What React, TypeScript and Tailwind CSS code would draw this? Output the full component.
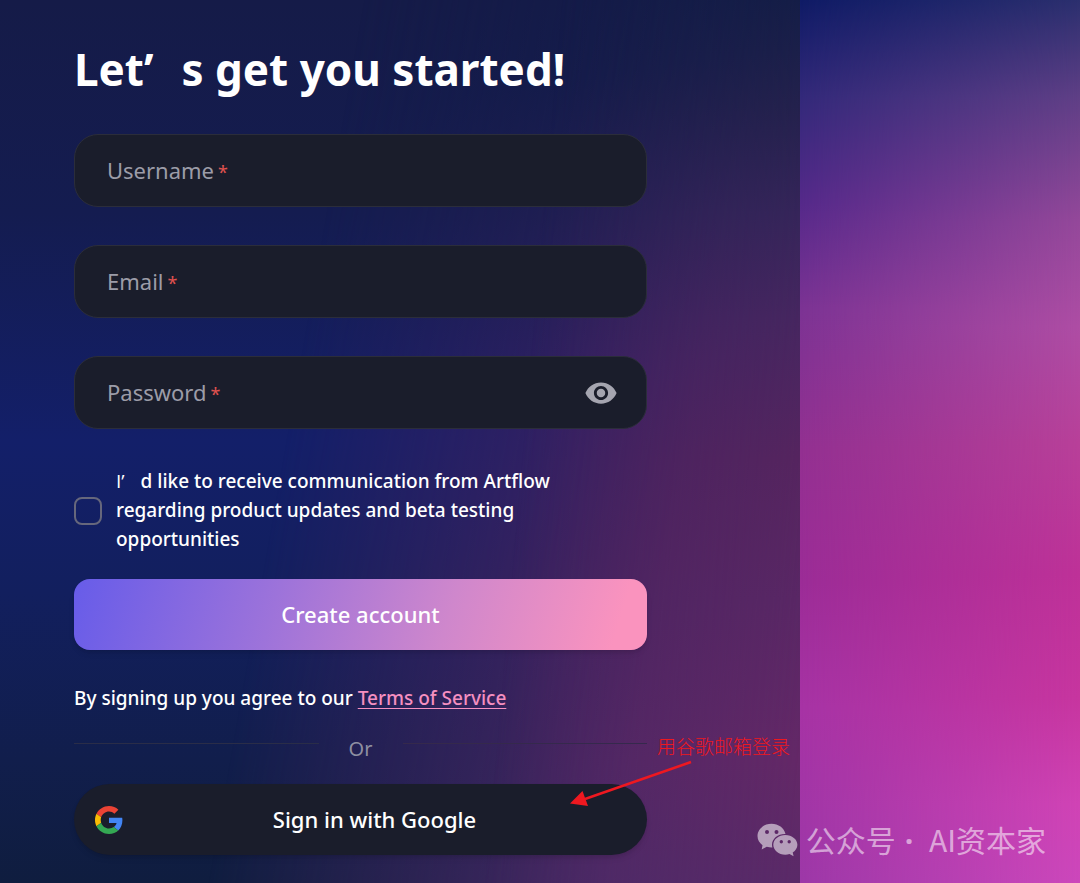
import { MdVisibility } from "react-icons/md";

function Field({ id, label, type }: { id: string; label: string; type: string }) {
  return (
    <div className="relative flex h-[73px] items-center rounded-3xl border border-[#2b2d3a] bg-[#1a1d2b]">
      <input
        id={id}
        type={type}
        required
        placeholder=" "
        className="peer h-full w-full rounded-3xl bg-transparent px-8 text-[22px] text-white outline-none"
      />
      <label
        htmlFor={id}
        className="pointer-events-none absolute left-8 text-[22px] leading-8 text-[#9c9ca8] peer-[:not(:placeholder-shown)]:hidden"
      >
        {label}
        <span className="ml-1 text-lg leading-8 text-[#e0524f]">*</span>
      </label>
      {type === "password" && (
        <button type="button" aria-label="Show password" className="mr-7 shrink-0 text-[#a5a5b0]">
          <MdVisibility size={34} />
        </button>
      )}
    </div>
  );
}

function GoogleIcon() {
  return (
    <svg width="28" height="28" viewBox="0 0 48 48" aria-hidden="true">
      <path
        fill="#ea4335"
        d="M24 9.500c3.540 0 6.710 1.220 9.210 3.600l6.850-6.850C35.900 2.380 30.470 0 24 0 14.620 0 6.510 5.380 2.560 13.220l7.980 6.190C12.430 13.720 17.740 9.500 24 9.500z"
      />
      <path
        fill="#4285f4"
        d="M46.980 24.550c0-1.570-.15-3.090-.38-4.550H24v9.020h12.940c-.58 2.960-2.260 5.480-4.780 7.180l7.730 6c4.510-4.180 7.090-10.360 7.090-17.650z"
      />
      <path
        fill="#fbbc05"
        d="M10.530 28.590c-.48-1.450-.76-2.990-.76-4.590s.27-3.140.76-4.590l-7.980-6.190C.92 16.460 0 20.120 0 24c0 3.880.92 7.540 2.560 10.780l7.970-6.190z"
      />
      <path
        fill="#34a853"
        d="M24 48c6.480 0 11.930-2.130 15.890-5.810l-7.730-6c-2.150 1.450-4.920 2.300-8.160 2.300-6.260 0-11.570-4.220-13.470-9.910l-7.980 6.190C6.510 42.620 14.620 48 24 48z"
      />
    </svg>
  );
}

function WeChatIcon() {
  return (
    <svg width="41" height="34" viewBox="0 0 41 34" fill="currentColor" aria-hidden="true">
      <path
        fillRule="evenodd"
        d="M14.500.8C7 .8.5 6 .5 13c0 3.800 1.900 7 5 9.200L4.700 26.500l5.100-2.700c1.600.5 3.200.7 5 .7h.6A9.600 9.600 0 0 1 15 21.600c0-6.100 5.900-10.700 12.900-10.700h.6C27 5 21.500.8 14.500.8ZM10 6.900a2 2 0 1 1 0 4 2 2 0 0 1 0-4Zm9.500 0a2 2 0 1 1 0 4 2 2 0 0 1 0-4Z"
      />
      <path
        fillRule="evenodd"
        d="M28.300 11.900c-6.700 0-12 4.400-12 9.900s5.300 9.900 12 9.900c1.500 0 2.900-.2 4.200-.6l4.100 2.100-.9-3.700c2.900-1.800 4.700-4.600 4.700-7.700 0-5.500-5.400-9.900-12.100-9.900Zm-4 5.200a1.700 1.700 0 1 1 0 3.400 1.700 1.700 0 0 1 0-3.400Zm7.900 0a1.700 1.700 0 1 1 0 3.400 1.700 1.700 0 0 1 0-3.400Z"
      />
    </svg>
  );
}

export default function App() {
  return (
    <div className="relative flex min-h-screen bg-[#151b48] font-['Noto_Sans','Noto_Sans_CJK_SC',sans-serif] text-white">
      <main className="relative isolate w-[74.1%] bg-[linear-gradient(180deg,#151b48_0%,#141c50_24%,#131f69_50%,#121f5e_67%,#111e4c_86%,#0f1d3f_100%)] pt-[39px] pb-7 pl-[74px]">
        <div className="absolute inset-0 -z-10 bg-[linear-gradient(172deg,#131b47_0%,#151c4b_16%,#2a2055_31%,#3e2160_46%,#48235f_67%,#472a66_100%)] mask-[linear-gradient(100deg,transparent_38%,#000_80%)]" />
        <div className="absolute inset-0 -z-10 bg-[linear-gradient(180deg,#151e46_0%,#25224c_12%,#37265a_24%,#482760_36%,#57255f_52%,#5a2765_68%,#642867_86%,#5a2a68_100%)] mask-[linear-gradient(95deg,transparent_64%,#000_99%)]" />
        <form className="w-[573px] max-w-full" onSubmit={(e) => e.preventDefault()}>
          <h1 className="mb-[35px] text-[44px] leading-[60px] font-bold">
            Let<span className="mr-7 font-['Open_Sans',sans-serif]">’</span>s get you started!
          </h1>
          <div className="flex flex-col gap-[38px]">
            <Field id="username" label="Username" type="text" />
            <Field id="email" label="Email" type="email" />
            <Field id="password" label="Password" type="password" />
          </div>
          <div className="mt-[38px] flex items-center gap-[14px]">
            <input
              id="updates"
              type="checkbox"
              className="size-7 shrink-0 appearance-none rounded-lg border-2 border-[#66677c] checked:bg-[#6c5fe8]"
            />
            <label htmlFor="updates" className="max-w-[460px] text-[19px] leading-[29px] font-medium">
              <span className="mr-4 font-['Open_Sans',sans-serif]">I’</span>d like to receive communication from
              Artflow regarding product updates and beta testing opportunities
            </label>
          </div>
          <button
            type="submit"
            className="mt-[25px] h-[71px] w-full rounded-2xl bg-[linear-gradient(107deg,#675ce9_0%,#9d73da_35%,#cf87cc_65%,#fa93be_94%)] text-[22px] font-medium shadow-md"
          >
            Create account
          </button>
          <p className="mt-8 text-[19px] leading-8 font-medium">
            By signing up you agree to our{" "}
            <a href="#terms" className="text-[#f58fc0] underline underline-offset-3">
              Terms of Service
            </a>
          </p>
          <div className="mt-[17px] flex h-[53px] items-start">
            <span className="mt-3 h-px flex-1 bg-[#2a2d48]" />
            <span className="w-[84px] pt-1 text-center text-xl leading-7 text-[#8f90a2]">Or</span>
            <span className="mt-3 h-px flex-1 bg-[#35294c]" />
          </div>
          <button
            type="button"
            className="flex h-[71px] w-full items-center rounded-full bg-[#1a1d2b] px-[21px] text-[22px] font-medium shadow-md"
          >
            <GoogleIcon />
            <span className="flex-1 text-center">Sign in with Google</span>
          </button>
        </form>
      </main>
      <div className="relative flex-1 bg-[linear-gradient(180deg,#0f1b66_0%,#33297a_11%,#55298a_23%,#7c3394_35%,#933091_51%,#9c2c97_66%,#a733a5_80%,#9d38a8_100%)]">
        <div className="absolute inset-0 bg-[linear-gradient(180deg,#2b2f6e_0%,#5f3f86_11%,#94489a_25%,#ae4da4_37%,#b84099_50%,#be3198_65%,#c7359f_79%,#d043b5_91%,#cc47bb_100%)] mask-[linear-gradient(90deg,transparent,#000)]" />
      </div>
      <div className="pointer-events-none absolute top-[732px] left-[570px] text-[#ee1820]">
        <p className="ml-[87px] font-['Noto_Sans_CJK_SC',sans-serif] text-[19px] leading-[28px] font-light">
          用谷歌邮箱登录
        </p>
        <svg width="124" height="48" viewBox="0 0 124 48" className="absolute top-[28px] left-0" aria-hidden="true">
          <path d="M121 2 15 39" stroke="currentColor" strokeWidth="2.500" />
          <path d="M0 43.500 12.500 31 18 46Z" fill="currentColor" />
        </svg>
      </div>
      <div className="pointer-events-none absolute right-[34px] bottom-[26px] flex items-center gap-2 font-['Noto_Sans_CJK_SC',sans-serif] text-[30px] leading-8 text-[#ffffff8c]">
        <WeChatIcon />
        <span>
          公众号<span className="mx-[9px] font-['Open_Sans',sans-serif] font-bold">·</span> AI资本家
        </span>
      </div>
    </div>
  );
}
